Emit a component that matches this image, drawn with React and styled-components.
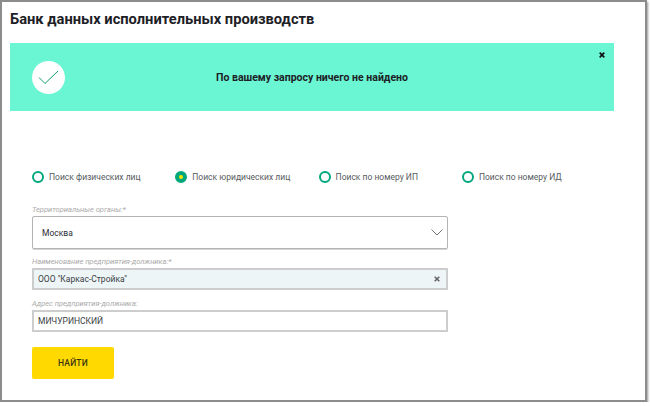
import React from "react";
import styled, { createGlobalStyle } from "styled-components";

const Global = createGlobalStyle`
  html, body {
    margin: 0;
    padding: 0;
    background: #fff;
  }
  * {
    box-sizing: border-box;
  }
`;

const Frame = styled.div`
  width: 647px;
  height: 402px;
  border: 2px solid #8c8c8c;
  background: #fff;
  box-shadow: 1px 2px 2px rgba(0, 0, 0, 0.4);
  font-family: Roboto, "Liberation Sans", sans-serif;
  color: #1d2126;
  padding: 8px 0 0 8px;
`;

const Title = styled.h1`
  margin: 0;
  font-size: 14.7px;
  line-height: 18px;
  font-weight: 700;
`;

const Banner = styled.div`
  position: relative;
  width: 604px;
  height: 68px;
  margin-top: 15px;
  padding-left: 22px;
  background: #6af5d3;
  display: flex;
  align-items: center;
`;

const CheckCircle = styled.div`
  width: 33px;
  height: 33px;
  border-radius: 50%;
  background: #fff;
  display: flex;
  align-items: center;
  justify-content: center;
`;

const Message = styled.div`
  flex: 1;
  padding-right: 55px;
  text-align: center;
  font-size: 10.5px;
  font-weight: 700;
`;

const Close = styled.svg`
  position: absolute;
  top: 9px;
  right: 9px;
  width: 6px;
  height: 6px;
`;

const Form = styled.div`
  padding-left: 22px;
`;

const RadioRow = styled.div`
  display: grid;
  grid-template-columns: repeat(4, 143.3px);
  margin-top: 59px;
`;

const Radio = styled.div`
  display: flex;
  align-items: center;
  gap: 5px;
  height: 14px;
  font-size: 8.5px;
  color: #565b60;
`;

const Dot = styled.span`
  width: 12px;
  height: 12px;
  border-radius: 50%;
  border: ${(p) => (p.$active ? "4px" : "2px")} solid #00a77d;
  background: ${(p) => (p.$active ? "#ffe600" : "#fff")};
`;

const Label = styled.div`
  margin-top: ${(p) => p.$gap}px;
  font-size: 7.5px;
  line-height: 10px;
  font-style: italic;
  color: #ababab;
`;

const Select = styled.div`
  width: 416px;
  height: 33px;
  margin-top: 1px;
  padding: 0 4px 0 9px;
  display: flex;
  align-items: center;
  justify-content: space-between;
  border: 1px solid #b4b4b4;
  border-radius: 2px;
  box-shadow: 0 1px 0 #d4d4d4;
  font-size: 8.5px;
  color: #2a2e33;
`;

const Field = styled.div`
  width: 416px;
  height: 22px;
  margin-top: 1px;
  padding: 0 6px 0 4px;
  display: flex;
  align-items: center;
  justify-content: space-between;
  border: 2px solid #cdcdcd;
  background: ${(p) => (p.$filled ? "#eef5f7" : "#fff")};
  font-size: 8.5px;
  color: #3a3e43;
`;

const FindButton = styled.button`
  display: block;
  width: 82px;
  height: 32px;
  margin-top: 15px;
  border: 0;
  border-radius: 2px;
  background: #ffd900;
  font-family: inherit;
  font-size: 8.5px;
  font-weight: 500;
  letter-spacing: 0.2px;
  color: #3a3610;
`;

const options = [
  { text: "Поиск физических лиц" },
  { text: "Поиск юридических лиц", active: true },
  { text: "Поиск по номеру ИП" },
  { text: "Поиск по номеру ИД" },
];

function CrossIcon({ color, width }) {
  return (
    <svg width="6" height="6" viewBox="0 0 6 6">
      <path d="M0.7 0.7 L5.3 5.3 M5.3 0.7 L0.7 5.3" stroke={color} strokeWidth={width} />
    </svg>
  );
}

export default function App() {
  return (
    <Frame>
      <Global />
      <Title>Банк данных исполнительных производств</Title>
      <Banner>
        <CheckCircle>
          <svg width="21" height="15" viewBox="0 0 21 15">
            <path d="M1 7.5 L7 13.5 L20 1" fill="none" stroke="#0f9d6c" strokeWidth="1" />
          </svg>
        </CheckCircle>
        <Message>По вашему запросу ничего не найдено</Message>
        <Close viewBox="0 0 6 6">
          <path d="M0.7 0.7 L5.3 5.3 M5.3 0.7 L0.7 5.3" stroke="#111" strokeWidth="1.7" />
        </Close>
      </Banner>
      <Form>
        <RadioRow>
          {options.map((o) => (
            <Radio key={o.text}>
              <Dot $active={o.active} />
              {o.text}
            </Radio>
          ))}
        </RadioRow>
        <Label $gap={21}>Территориальные органы:*</Label>
        <Select>
          Москва
          <svg width="12" height="7" viewBox="0 0 12 7">
            <path d="M0.5 0.5 L6 6 L11.5 0.5" fill="none" stroke="#777" strokeWidth="1" />
          </svg>
        </Select>
        <Label $gap={8}>Наименование предприятия-должника:*</Label>
        <Field $filled>
          ООО "Каркас-Стройка"
          <CrossIcon color="#666" width={1.6} />
        </Field>
        <Label $gap={9}>Адрес предприятия-должника:</Label>
        <Field>МИЧУРИНСКИЙ</Field>
        <FindButton>НАЙТИ</FindButton>
      </Form>
    </Frame>
  );
}
